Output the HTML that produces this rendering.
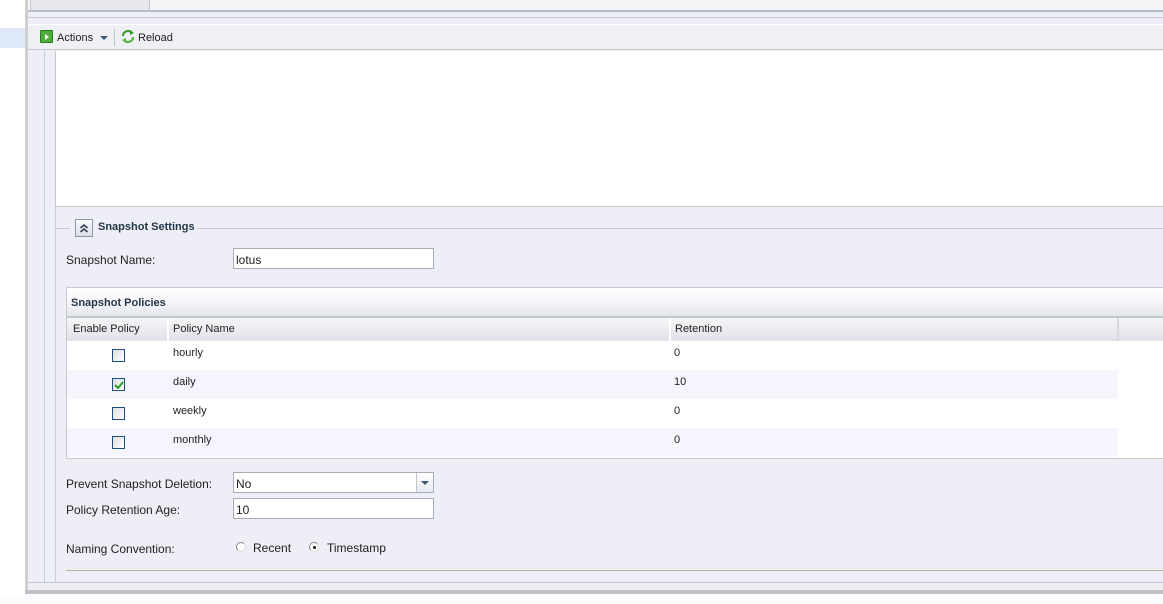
<!DOCTYPE html>
<html><head><style>
*{margin:0;padding:0;box-sizing:border-box}
body{width:1163px;height:604px;position:relative;overflow:hidden;background:#fdfbfd;font-family:"Liberation Sans",Tahoma,sans-serif;font-size:12px;color:#222}
.a{position:absolute}
.lbl{position:absolute;font-size:12px;color:#222}
.inp{position:absolute;background:#fff;border:1px solid #a5acb5;font-size:12px;padding:4px 2px;height:21px}
.cb{position:absolute;width:13px;height:13px;border:1px solid #1f4e84;background:linear-gradient(135deg,#ddd,#fff)}
.cell{position:absolute;font-size:11px;color:#222}
</style></head><body>
<div class="a" style="left:0;top:0;width:25px;height:594px;background:#fff"></div>
<div class="a" style="left:0;top:28px;width:25px;height:20px;background:#dde8f8"></div>
<div class="a" style="left:25px;top:0;width:3px;height:594px;background:#cfcfcf"></div>
<div class="a" style="left:28px;top:0;width:1135px;height:590px;background:#eeeef6"></div>
<div class="a" style="left:28px;top:0;width:1135px;height:10px;background:#f5f5f5"></div>
<div class="a" style="left:30px;top:0;width:120px;height:11px;background:#e6e8ee;border-left:1px solid #c0c4cc;border-right:1px solid #c0c4cc"></div>
<div class="a" style="left:28px;top:10px;width:1135px;height:2px;background:#b8bcc8"></div>
<div class="a" style="left:28px;top:17px;width:1135px;height:1px;background:#c8cad6"></div>
<div class="a" style="left:28px;top:24px;width:1135px;height:1px;background:#fff"></div>
<div class="a" style="left:28px;top:25px;width:1135px;height:25px;background:#eef0f5;border-bottom:1px solid #c6c8cc"></div>
<div class="a" style="left:40px;top:30px;width:13px;height:13px;background:#4cae3a;border:1px solid #2c7a20;border-radius:1px"></div>
<div class="a" style="left:45px;top:34px;width:0;height:0;border-left:4px solid #fff;border-top:3px solid transparent;border-bottom:3px solid transparent"></div>
<div class="lbl" style="left:57px;top:32px;font-size:11px">Actions</div>
<div class="a" style="left:100px;top:36px;border-top:4px solid #3a5a78;border-left:4px solid transparent;border-right:4px solid transparent"></div>
<div class="a" style="left:114px;top:29px;width:1px;height:17px;background:#c0c4cc"></div>
<svg class="a" style="left:121px;top:29px" width="14" height="15" viewBox="0 0 14 15"><path d="M2 7 A5 5 0 0 1 11 4" stroke="#3c9a2a" stroke-width="2.2" fill="none"/><path d="M9 1 L13 4 L9 6z" fill="#3c9a2a"/><path d="M12 8 A5 5 0 0 1 3 11" stroke="#5ab43c" stroke-width="2.2" fill="none"/><path d="M5 14 L1 11 L5 9z" fill="#5ab43c"/></svg>
<div class="lbl" style="left:138px;top:32px;font-size:11px">Reload</div>
<div class="a" style="left:44px;top:51px;width:1px;height:531px;background:#c3d0dc"></div>
<div class="a" style="left:55px;top:51px;width:1px;height:531px;background:#c3d0dc"></div>
<div class="a" style="left:55px;top:51px;width:1108px;height:156px;background:#fff;border-left:1px solid #c6c8cc;border-bottom:1px solid #c6c8cc"></div>
<div class="a" style="left:55px;top:228px;width:15px;height:1px;background:#c6c8cc"></div>
<div class="a" style="left:197px;top:228px;width:966px;height:1px;background:#c6c8cc"></div>
<div class="a" style="left:75px;top:219px;width:18px;height:18px;border:1px solid #8a96a8;background:linear-gradient(#fafafa,#dde0e8)"></div>
<svg class="a" style="left:79px;top:223px" width="10" height="10"><path d="M1.5 5 L5 2 L8.5 5 M1.5 9 L5 6 L8.5 9" stroke="#2a3a50" stroke-width="1.5" fill="none"/></svg>
<div class="lbl" style="left:98px;top:221px;font-weight:bold;color:#243648;font-size:11px">Snapshot Settings</div>
<div class="lbl" style="left:66px;top:253px">Snapshot Name:</div>
<div class="inp" style="left:233px;top:248px;width:201px">lotus</div>
<div class="a" style="left:66px;top:287px;width:1097px;height:172px;background:#fff;border:1px solid #c6c8cc;border-right:none"></div>
<div class="a" style="left:67px;top:288px;width:1096px;height:28px;background:linear-gradient(#fff,#f8f8fb 40%,#e4e7ee)"></div>
<div class="lbl" style="left:71px;top:297px;font-weight:bold;color:#243648;font-size:11px">Snapshot Policies</div>
<div class="a" style="left:67px;top:316px;width:1096px;height:25px;background:linear-gradient(#f6f4f6,#e0e3ea);border-top:2px solid #c4c8cc"></div>
<div class="a" style="left:167px;top:318px;width:2px;height:23px;background:#fff"></div>
<div class="a" style="left:669px;top:318px;width:2px;height:23px;background:#fff"></div>
<div class="a" style="left:1117px;top:318px;width:2px;height:23px;background:#d8dade"></div>
<div class="cell" style="left:73px;top:323px">Enable Policy</div>
<div class="cell" style="left:173px;top:323px">Policy Name</div>
<div class="cell" style="left:675px;top:323px">Retention</div>
<div class="a" style="left:67px;top:370px;width:1051px;height:29px;background:#f5f6fd"></div>
<div class="a" style="left:67px;top:428px;width:1051px;height:29px;background:#f5f6fd"></div>
<div class="cb" style="left:112px;top:349px"></div>
<div class="cb" style="left:112px;top:378px"><svg style="position:absolute;left:1px;top:2px" width="10" height="8"><path d="M1 4 L4 7 L9 1" stroke="#2a9a20" stroke-width="2" fill="none"/></svg></div>
<div class="cb" style="left:112px;top:407px"></div>
<div class="cb" style="left:112px;top:436px"></div>
<div class="cell" style="left:173px;top:347px">hourly</div>
<div class="cell" style="left:173px;top:376px">daily</div>
<div class="cell" style="left:173px;top:405px">weekly</div>
<div class="cell" style="left:173px;top:434px">monthly</div>
<div class="cell" style="left:674px;top:347px">0</div>
<div class="cell" style="left:674px;top:376px">10</div>
<div class="cell" style="left:674px;top:405px">0</div>
<div class="cell" style="left:674px;top:434px">0</div>
<div class="lbl" style="left:66px;top:477px">Prevent Snapshot Deletion:</div>
<div class="inp" style="left:233px;top:472px;width:201px">No</div>
<div class="a" style="left:416px;top:473px;width:17px;height:19px;background:linear-gradient(#fff,#e8eaf0);border-left:1px solid #c0c4cc"></div>
<div class="a" style="left:421px;top:481px;border-top:4px solid #3a5a78;border-left:4px solid transparent;border-right:4px solid transparent"></div>
<div class="lbl" style="left:66px;top:503px">Policy Retention Age:</div>
<div class="inp" style="left:233px;top:498px;width:201px">10</div>
<div class="lbl" style="left:66px;top:542px">Naming Convention:</div>
<div class="a" style="left:236px;top:542px;width:10px;height:10px;border-radius:50%;border:1px solid #888;border-right-color:#ddd;border-bottom-color:#ddd;background:#fff"></div>
<div class="lbl" style="left:253px;top:541px">Recent</div>
<div class="a" style="left:309px;top:542px;width:10px;height:10px;border-radius:50%;border:1px solid #888;border-right-color:#ddd;border-bottom-color:#ddd;background:#fff"></div>
<div class="a" style="left:313px;top:546px;width:3px;height:3px;border-radius:50%;background:#111"></div>
<div class="lbl" style="left:327px;top:541px">Timestamp</div>
<div class="a" style="left:66px;top:570px;width:1097px;height:1px;background:#b5b298"></div>
<div class="a" style="left:28px;top:582px;width:1135px;height:1px;background:#c8c8cc"></div>
<div class="a" style="left:25px;top:590px;width:1138px;height:4px;background:#c0c0c4"></div>
</body></html>
